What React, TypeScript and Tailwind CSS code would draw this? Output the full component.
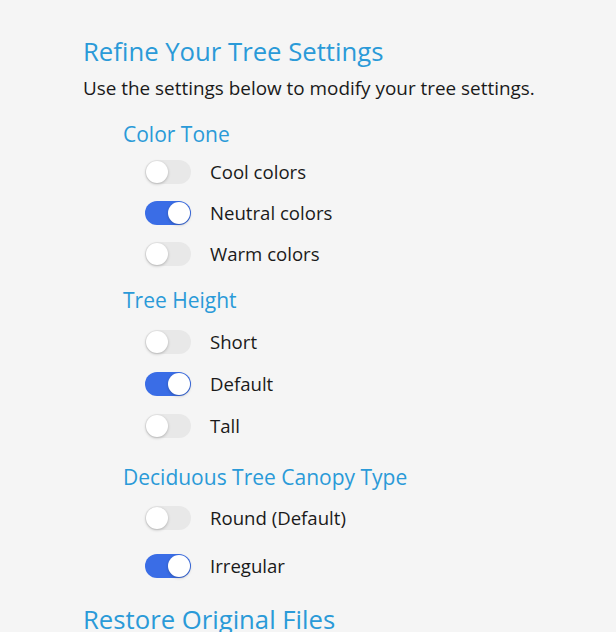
import { useState } from 'react';

type Group = { title: string; options: string[]; selected: number; top: string; rows: string };

const groups: Group[] = [
  { title: 'Color Tone', options: ['Cool colors', 'Neutral colors', 'Warm colors'], selected: 1, top: 'mt-[18px]', rows: 'mt-[11px] gap-[17px]' },
  { title: 'Tree Height', options: ['Short', 'Default', 'Tall'], selected: 1, top: 'mt-[19px]', rows: 'mt-[15px] gap-[18px]' },
  { title: 'Deciduous Tree Canopy Type', options: ['Round (Default)', 'Irregular'], selected: 1, top: 'mt-[24px]', rows: 'mt-[14px] gap-[24px]' },
];

function Toggle({ on, onClick }: { on: boolean; onClick: () => void }) {
  return (
    <button
      onClick={onClick}
      className={`relative h-[24px] w-[46px] shrink-0 rounded-full ${on ? 'bg-[#3a6de6]' : 'bg-[#e8e8e8]'}`}
    >
      <span
        className={`absolute top-[1px] h-[22px] w-[22px] rounded-full bg-white shadow-[0_1px_3px_rgba(0,0,0,0.25)] ${
          on ? 'left-[23px]' : 'left-[1px]'
        }`}
      />
    </button>
  );
}

export default function App() {
  const [sel, setSel] = useState(groups.map((g) => g.selected));

  return (
    <div
      className="min-h-screen bg-[#f5f5f5] pl-[83px] pt-[34px] text-[#1a1a1a]"
      style={{ fontFamily: '"Open Sans", "Noto Sans", sans-serif' }}
    >
      <h1 className="text-[25.7px] leading-[36px] text-[#2a9ad8]">Refine Your Tree Settings</h1>
      <p className="mt-[5px] text-[18.9px] leading-[26px]">Use the settings below to modify your tree settings.</p>

      <div className="pl-[40px]">
        {groups.map((g, gi) => (
          <div key={g.title} className={g.top}>
            <h2 className="text-[21px] leading-[30px] text-[#2a9ad8]">{g.title}</h2>
            <div className={`flex flex-col pl-[22px] ${g.rows}`}>
              {g.options.map((o, oi) => (
                <div key={o} className="flex items-center gap-[19px]">
                  <Toggle
                    on={sel[gi] === oi}
                    onClick={() => setSel((s) => s.map((v, i) => (i === gi ? oi : v)))}
                  />
                  <span className="text-[18.6px] leading-[24px]">{o}</span>
                </div>
              ))}
            </div>
          </div>
        ))}
      </div>

      <h1 className="mt-[24px] text-[25.7px] leading-[36px] text-[#2a9ad8]">Restore Original Files</h1>
    </div>
  );
}
